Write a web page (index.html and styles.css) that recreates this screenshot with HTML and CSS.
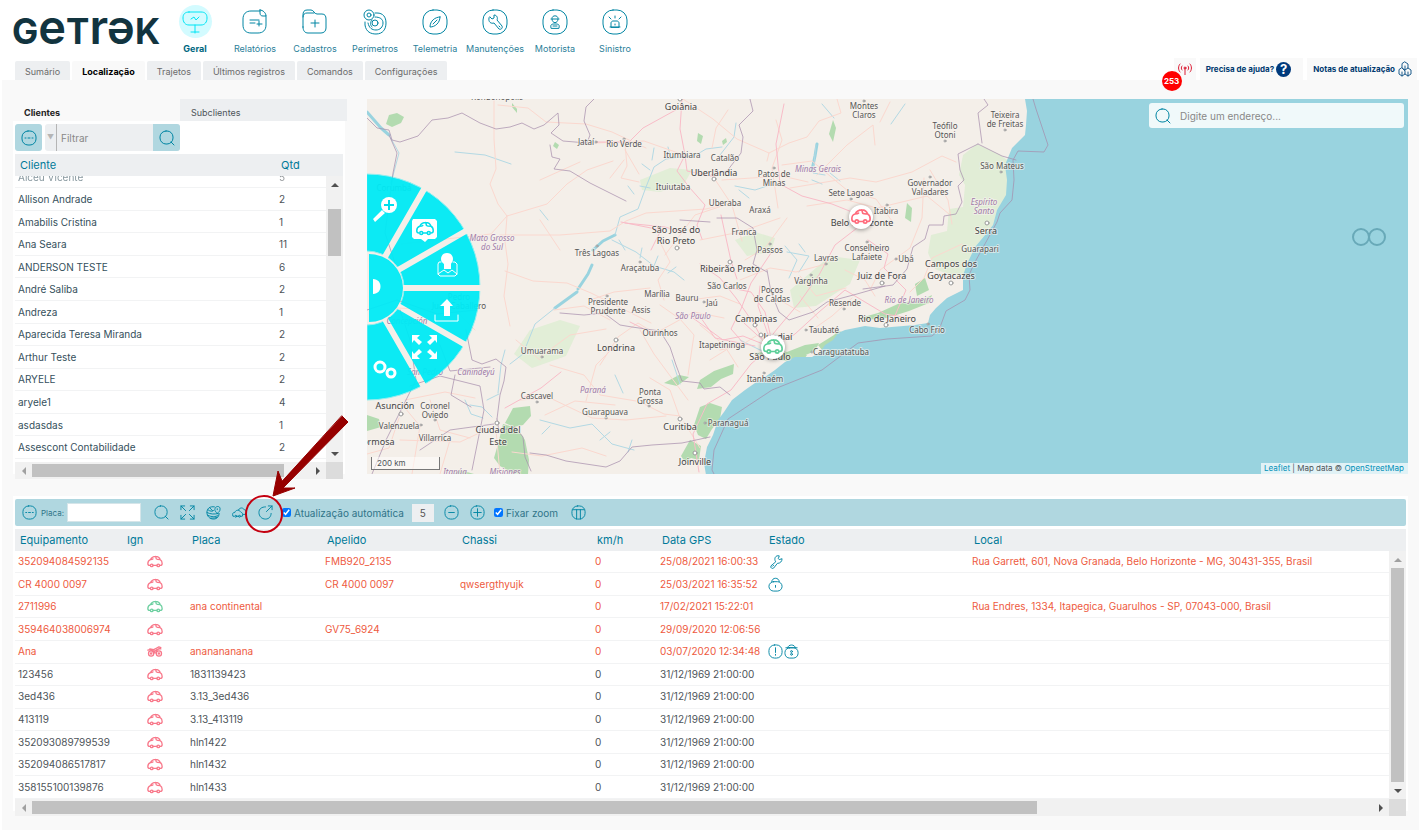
FILE: index.html
```html
<!DOCTYPE html>
<html lang="pt-BR">

<head>
    <meta charset="UTF-8">
    <meta name="viewport" content="width=device-width, initial-scale=1.0">
    <title>Getrak - Localização</title>
    <link rel="stylesheet" href="styles.css">
</head>

<body>
    <!-- icons -->
    <svg class="defs" aria-hidden="true">
        <symbol id="i-geral" viewBox="0 0 26 26">
            <path d="M7 3h12c4 0 6 2 6 6s-2 7-6 7H7c-4 0-6-3-6-7s2-6 6-6zM13 16v8M9 23h8M9 10l3-2 2 3 3-3" />
        </symbol>
        <symbol id="i-relatorios" viewBox="0 0 26 26">
            <path d="M18 2H9C4 2 1 5 1 10v6c0 5 3 8 8 8h7c5 0 8-3 8-8V7M18 1v3c0 2 1 3 3 3h3c0-3-3-6-6-6zM8 11h9M8 14h5M15 15h5M17 12v5" />
        </symbol>
        <symbol id="i-cadastros" viewBox="0 0 26 26">
            <path d="M1 18V6c0-3 1-5 4-5h4c3 0 3 4 6 4h5c3 0 4 2 4 5v9c0 3-2 5-5 5H6c-3 0-5-2-5-6zM1 8c0-3 2-4 4-4h7M13 11v7M9 14h8" />
        </symbol>
        <symbol id="i-perimetros" viewBox="0 0 26 26">
            <circle cx="7" cy="6" r="5" /><circle cx="7" cy="6" r="2" /><circle cx="13" cy="14" r="3" />
            <path d="M13 4h2c6 0 9 4 9 10s-3 11-10 11c-5 0-10-2-11-9v-3M13 8c5 0 8 2 8 6s-3 7-7 7-7-2-8-7M10 11c-2 2-2 5 0 7" />
        </symbol>
        <symbol id="i-telemetria" viewBox="0 0 26 26">
            <rect x="1" y="1" width="24" height="24" rx="10" />
            <path d="M18 8c-5 0-10 4-10 10 5 0 10-4 10-10zM11 15l4-4" />
        </symbol>
        <symbol id="i-manut" viewBox="0 0 26 26">
            <rect x="1" y="1" width="24" height="24" rx="10" />
            <path d="M8 8l2 2 2-1 0-3c3 0 4 3 3 5l5 6c1 2-1 4-3 3l-5-6c-3 1-6-1-5-5zM17 17l1 1" />
        </symbol>
        <symbol id="i-motorista" viewBox="0 0 26 26">
            <rect x="1" y="1" width="24" height="24" rx="10" />
            <path d="M10 9c0-3 6-3 6 0M9 10h8M10 10c0 5 6 5 6 0M9 19c-1-4 1-4 4-4s5 0 4 4zM11 17h4" />
        </symbol>
        <symbol id="i-sinistro" viewBox="0 0 26 26">
            <rect x="1" y="1" width="24" height="24" rx="10" />
            <path d="M9 18v-4c0-1 1-2 2-2h4c1 0 2 1 2 2v4zM8 18h10M13 9V7M9 10L7 8M17 10l2-2M13 15v1" />
        </symbol>
        <symbol id="i-menu" viewBox="0 0 16 16">
            <rect x="1" y="1" width="14" height="14" rx="6" />
            <path d="M4 8h1M7 8h2M11 8h1" />
        </symbol>
        <symbol id="i-search" viewBox="0 0 16 16">
            <rect x="1" y="1" width="13" height="13" rx="6" />
            <path d="M12 12l3 3" />
        </symbol>
        <symbol id="i-expand" viewBox="0 0 16 16">
            <path d="M1 5V1h4M1 1l5 5M11 1h4v4M15 1l-5 5M1 11v4h4M1 15l5-5M15 11v4h-4M15 15l-5-5" />
        </symbol>
        <symbol id="i-globe" viewBox="0 0 16 16">
            <path d="M9 2C4 1 1 4 1 8s3 7 7 7 6-3 6-6M2 5c2 2 5 2 6 1M1 8c4 2 8 2 12 1M2 11c4 2 8 2 11 0M5 14c3 0 5 0 7-1M12 9c-3-3-3-4-2-6s5-2 5 1-1 3-3 5zM12 4v1M4 3l3 3" />
        </symbol>
        <symbol id="i-cars" viewBox="0 0 16 16">
            <path d="M2 12H1c-1-3 0-4 2-4 1-3 4-3 6-1l1 1c1 0 2 2 1 4h-1M5 12h2M7 5c2-3 5-2 6 0 2 0 3 2 2 5h-3" />
            <circle cx="4" cy="12" r="1" /><circle cx="8" cy="12" r="1" />
        </symbol>
        <symbol id="i-refresh" viewBox="0 0 16 16">
            <path d="M8 2C4 2 1 4 1 8s3 7 7 7 6-3 6-6M9 7l6-6M11 1h4v4" />
        </symbol>
        <symbol id="i-minus" viewBox="0 0 16 16">
            <rect x="1" y="1" width="14" height="14" rx="6" />
            <path d="M5 8h6" />
        </symbol>
        <symbol id="i-plus" viewBox="0 0 16 16">
            <rect x="1" y="1" width="14" height="14" rx="6" />
            <path d="M4 8h8M8 4v8" />
        </symbol>
        <symbol id="i-columns" viewBox="0 0 16 16">
            <rect x="1" y="1" width="14" height="14" rx="6" />
            <path d="M2 5h12M6 5v10M10 5v10" />
        </symbol>
        <symbol id="i-car" viewBox="0 0 24 20">
            <path d="M4 16c-2 0-3-1-3-3 0-4 1-5 4-6 2-4 4-5 8-5s6 2 7 5c2 1 3 3 3 6 0 2-1 3-3 3M9 16h6M13 2l1 4c1 1 3 1 6 1M5 7c2 0 3 0 4-1" />
            <circle cx="7" cy="16" r="2" /><circle cx="17" cy="16" r="2" />
        </symbol>
        <symbol id="i-moto" viewBox="0 0 24 20">
            <circle cx="6" cy="13" r="4" /><circle cx="18" cy="13" r="4" /><circle cx="6" cy="13" r="1" /><circle cx="18" cy="13" r="1" />
            <path d="M1 8c5-2 7 0 9 4h4c0-5 3-7 7-6M4 6l6 1 4-2 4-2 3 1M10 9l5 0M10 11l5-4" />
        </symbol>
        <symbol id="i-key" viewBox="0 0 16 16">
            <path d="M8 8c-2-3 0-7 4-6l-1 3 1 1 3-1c0 3-2 5-5 5l-4 5c-1 1-4 0-3-2zM5 13l1-1" />
        </symbol>
        <symbol id="i-lock" viewBox="0 0 16 16">
            <rect x="1" y="5" width="14" height="10" rx="5" />
            <path d="M4 5c0-5 8-5 8 0M8 9v2" />
        </symbol>
        <symbol id="i-alert" viewBox="0 0 16 16">
            <rect x="1" y="1" width="14" height="14" rx="6" />
            <path d="M8 4v5M8 11v1" />
        </symbol>
        <symbol id="i-lock2" viewBox="0 0 16 16">
            <rect x="1" y="4" width="14" height="11" rx="5" />
            <path d="M4 4c0-4 8-4 8 0M2 4h12" />
            <circle cx="8" cy="8" r="1" /><circle cx="8" cy="11" r="1" />
        </symbol>
    </svg>

    <header class="header">
        <div class="top">
            <a href="#" class="logo" aria-label="Getrak">G<span>e</span>T<span>rə</span>K</a>
            <nav class="nav">
                <a href="#" class="current"><span class="ico"><svg><use href="#i-geral" /></svg></span>Geral</a>
                <a href="#"><span class="ico"><svg><use href="#i-relatorios" /></svg></span>Relatórios</a>
                <a href="#"><span class="ico"><svg><use href="#i-cadastros" /></svg></span>Cadastros</a>
                <a href="#"><span class="ico"><svg><use href="#i-perimetros" /></svg></span>Perímetros</a>
                <a href="#"><span class="ico"><svg><use href="#i-telemetria" /></svg></span>Telemetria</a>
                <a href="#"><span class="ico"><svg><use href="#i-manut" /></svg></span>Manutenções</a>
                <a href="#"><span class="ico"><svg><use href="#i-motorista" /></svg></span>Motorista</a>
                <a href="#"><span class="ico"><svg><use href="#i-sinistro" /></svg></span>Sinistro</a>
            </nav>
        </div>
        <div class="bar">
            <nav class="tabs">
                <a href="#">Sumário</a>
                <a href="#" class="current">Localização</a>
                <a href="#">Trajetos</a>
                <a href="#">Últimos registros</a>
                <a href="#">Comandos</a>
                <a href="#">Configurações</a>
            </nav>
            <div class="utils">
                <button type="button" class="antenna" aria-label="Alertas">
                    <svg viewBox="0 0 14 12"><path d="M7 5v7M4 3c-1 1-1 3 0 4M10 3c1 1 1 3 0 4M2 1c-2 2-2 6 0 8M12 1c2 2 2 6 0 8" /><circle cx="7" cy="5" r="1" /></svg>
                    <span class="badge">253</span>
                </button>
                <a href="#" class="ask">Precisa de ajuda? <span class="help">?</span></a>
                <a href="#" class="notes">Notas de atualização
                    <svg viewBox="0 0 14 16"><path d="M7 1l3 2v4L7 9 4 7V3zM4 7l3 3v3l-3 2-3-2V9zM10 7l3 2v4l-3 2-3-2M7 9V5M4 11v4M10 11v4" /></svg>
                </a>
            </div>
        </div>
    </header>

    <main class="page">
        <div class="upper">
            <section class="clients">
                <div class="subtabs">
                    <a href="#" class="current">Clientes</a>
                    <a href="#">Subclientes</a>
                </div>
                <div class="panel">
                    <div class="filter">
                        <button type="button" class="square" aria-label="Menu"><svg><use href="#i-menu" /></svg></button>
                        <div class="field">
                            <span class="caret">▼</span>
                            <input type="text" placeholder="Filtrar" aria-label="Filtrar">
                            <button type="button" class="square" aria-label="Buscar"><svg><use href="#i-search" /></svg></button>
                        </div>
                    </div>
                    <div class="grid">
                        <div class="view">
                            <table class="list">
                                <thead>
                                    <tr><th>Cliente</th><th class="qtd">Qtd</th></tr>
                                </thead>
                            </table>
                            <div class="rows">
                                <table class="list names">
                                    <tbody>
                                        <tr class="faded"><td>Alceu Vicente</td><td class="qtd">5</td></tr>
                                        <tr><td>Allison Andrade</td><td class="qtd">2</td></tr>
                                        <tr><td>Amabilis Cristina</td><td class="qtd">1</td></tr>
                                        <tr><td>Ana Seara</td><td class="qtd">11</td></tr>
                                        <tr><td>ANDERSON TESTE</td><td class="qtd">6</td></tr>
                                        <tr><td>André Saliba</td><td class="qtd">2</td></tr>
                                        <tr><td>Andreza</td><td class="qtd">1</td></tr>
                                        <tr><td>Aparecida Teresa Miranda</td><td class="qtd">2</td></tr>
                                        <tr><td>Arthur Teste</td><td class="qtd">2</td></tr>
                                        <tr><td>ARYELE</td><td class="qtd">2</td></tr>
                                        <tr><td>aryele1</td><td class="qtd">4</td></tr>
                                        <tr><td>asdasdas</td><td class="qtd">1</td></tr>
                                        <tr><td>Assescont Contabilidade</td><td class="qtd">2</td></tr>
                                    </tbody>
                                </table>
                            </div>
                        </div>
                        <div class="vbar">
                            <div class="cap"></div>
                            <i class="up"></i>
                            <div class="rail"><div class="thumb part"></div></div>
                            <i class="down"></i>
                        </div>
                        <div class="hbar">
                            <i class="left off"></i>
                            <div class="rail"><div class="thumb wide"></div></div>
                            <i class="right"></i>
                        </div>
                        <div class="corner"></div>
                    </div>
                </div>
            </section>

            <section class="map">
                <svg class="tiles" viewBox="367 99 1041 375" preserveAspectRatio="xMinYMin slice">
                    <rect class="land" x="367" y="99" width="1041" height="375" />
                    <!-- forests -->
                    <g class="park">
                        <path d="M977 144l22 10 14 10-5 16-1 16-10 14-4 15-18 22-6 16-4 10-10 4-20-8-7-16 3-18 16-4 2-22 14-2 2-22-6-10 4-20z" />
                        <path d="M640 180l30-12 22 2-8 14-24 8-18-2zM790 290l40-34 30 4-10 24-34 22-22 2zM530 330l30-10 20 6-14 30-34 12-18-14zM735 240l20-8 20 6-4 14-24 4z" />
                    </g>
                    <g class="wood">
                        <path d="M389 115l8-2 7 4-3 6-9 4-6-3zM367 415l12 4 2 8-14 4zM460 470l14 4h-20zM513 408l17-2 1 10-8 9-9 2-9-4zM503 424l14 4 8 12 4 20-1 14h-14l-14-8-6-8 4-14zM512 103l5 6 0 4-5-6z" />
                        <path d="M555 142l4 3-2 4-4-3zM698 133l5 3-2 8-4-3zM722 141l4-3 1 4-4 3zM833 120l3 8-3 14-4-8zM907 203l5 5-1 14-6-4zM700 380l14-9 20-7-1 10-12 5-10 8-14 2zM700 407l10-4 12 4-2 12-8 10-6 10-8-4-4-10 4-12z" />
                        <path d="M690 440l11 6-2 14-8-2-6 4-4-6zM753 353l28-2 26 4-2 3-20 3-12-3zM787 352l18-7 14-2-4 8-14 6-12 0zM818 345l16-10 4-4 8 2-10 9-14 8zM860 318l18-5 22-10 24-4 8-4-3 8-20 8-22 7-22 2zM915 284l10-6 4 12-12 6zM664 383l15-8 10 2-12 9z" />
                    </g>
                    <!-- sea -->
                    <path class="sea" d="M1025 99l2 12-1 14-1 10-13 13-7 17 2 15-1 15-9 15-4 15-8 10-10 12-7 15-5 13v15l-4 2-12 6-11 10-6 7-2 8-13 2-35 3-15-2-20 4-7 3-5 7-8 5-5 7-8 5-17 0-10 5-10 8-10 7-10 6-10 7-13 10-8 12-6 8-5 15-6 12-3 16 2 12h703V99z" />
                    <!-- rivers and lakes -->
                    <path class="river wide" d="M367 112l14 16 8 7M578 289l10-15 4-9M555 308l22-16M593 250l10-9 12-6M812 170l3-14 2-12" />
                    <path class="river" d="M389 135l10 18-8 30M555 308l-20 16-12 30-13 10M505 350l-4 15-3 28M615 235l5-18 18-8 8-22 8-20 12-8 30-4 10-6 16-2M612 240l24 12 18 14 20 6 10 8M625 250l-6-10M640 258l2-10M654 266l4-10M668 273l8-6M650 170l-8-6M634 194l-6-8M640 186l10 2M652 160l2-12M670 155l-2-8M720 155l14-18 2-14M735 186l20 4 12-4M739 190l10 8M816 145l-3 28 12 2M812 180l10 4M787 252l22 4-10 16M785 246l12 14-8 18M805 252l-6-8M740 340l20 10 16 2M672 360l8 24M615 375l8 18M540 420l30 8 22-4 20 20 22 6M550 426l-8 8M600 440l10-8M632 440l-4 12M487 400l12-6M470 405l12 2 10 10M465 400l6 14 12 4M830 173l10 8M822 104l12 14M905 104l-14 20M455 152l30 3 26 9M540 210l8 10" />
                    <!-- roads -->
                    <g class="road">
                        <path d="M494 99v40l2 30-6 15 8 20 9 12-2 26 3 22-4 32 6 30M507 216l40-12 20-20 20-14 26-9M507 216l-16 18-90 10M500 235h60l50-4 16-10 20-8 60-4 24-6M505 271l28 10 34 2 24 10 60 30M498 105l30 3 18 14 40 2 26 8 34 16M594 143l50-2 40 14M625 144l2 22-6 12 18 4M625 150l14 24M610 178l14-18" />
                        <path d="M683 99l30 20 24 20 32 14-2 8M769 153l20-10 18-6 12-16 22-8-4-14M778 208l-6-40 10-28-6-20M782 165l30-4 36 30 28 8 16 22M790 188l60-10 26 4 36-10 30-16 14 6M807 206l40-6 30 8 50-12 22 18M880 122l10-20M875 145l-2-20-26 20-30 30M930 170l18 30 4 24M870 290l10-20 30-22 12-30 2-40M910 292l14-14 8-20 30-14M728 110l-12 18-4 20M722 180l60-4 26 6M712 175l20 30 10 36M725 205l-30 10-30 40M700 240l40-8 40-14M745 260l20-12 22-30M740 280l30-12 26 4 30-8M800 276l16 20 30-8M845 270l20 10 10 16" />
                        <path d="M540 360l-24-20M550 365l34 10 16 20 36 6M540 357l30-22 36-6M600 365l18-28 20-14 16 10M640 330l14 24 34 46M654 334l40-22 30 6M616 345l-20 20-10 36M640 402l24 12 16 2M680 418l-10-28-20-12M545 415l30-14 40 4M520 400l30-2 42 20 34 2 40-4M512 452l30 4 40-8 24 8M610 320l-26-14-30 4M590 300l24-8 36-4M660 305l20 14 14 16-6 40M690 300l30-4 20 8M700 325l24 20 14 22M720 350l20-4 16-10M710 360l16-10M664 300l-6-20 12-18-10-20M430 400l10 30 30 8M400 402l20 24-8 48M405 400l40-8 30 6M399 418l-10 30-22 6M400 440l60 2 30-14M440 474l10-34M500 474l-4-44M475 330l-20-20-60-2M540 180l40-18M560 250l-20-30M700 448l-16-26M818 318l-18-22M812 330l20-14 20-18M780 300l20 12" />
                    </g>
                    <path class="road main" d="M682 99l-2 30 5 26-8 16 12 16 16 18-8 20 5 14M683 106l-40 22-14 14h-32M685 155l2 16 28 6M625 223l40 4 20 6M700 264l20 14 16 20 18 26 12 22M721 215l10 46 6 18M745 345l-14-16 10-20 10-26 20-30M852 212l-20-8-30-8-22-12-4-40 8-40M861 225l-26 20-16 30-20 28-22 26-14 18M868 240l20 14-4 14 22 22-12 28M773 348l-30-12-20 4-30-22M773 348l22-14 24-22 26-22 40 24 24 4M765 352l-14 12-20 26-24 14-14 30 6 38M505 408l36-20 20-16M621 222l40 8-10 20M773 346l-8-34-14-20-20-4M755 346l-40-8-14-20M768 345l-24-22M770 340l-12-34 2-20M654 334l-24-12" />
                    <!-- borders -->
                    <path class="border" d="M367 118l10 10 12 2 3 10 8 2 18-6 14-16 16-2 14-5 18 10 16 6 14-2 12-4 12 6 10-4 14-12 1 12-8 8 12 8 24 2 3-8-6-14 2-14 14-14M550 145l2 12 8 2-6 10 16 2 20 12 36 18M389 135l8 18-4 20-8 60 10 30M750 99l3 12-14 14 4 12-2 16-14 18-16 4M984 99l4 6-10 8 4 30M978 144l24 12 14 4M978 144l-20 10 2 16 4 10-6 6 4 16-6 12-12 2-1 9-14 0-4 14-12 8-6 22-14 16-30 4M717 218l20 0 16 10 4 22-4 14 14 8M680 220l30 2M767 270l4 22 8 20 10 8 24-8 14-10 30-8 28-8M560 313l24 2 20-2 16 12 12 2 28 4 10 16 6 18 6 16 18 2 4 6 16-2 10 8" />
                    <path class="border" d="M466 330l6 30 10 4 14-5 10 8-2 14-4 14-3 24M497 419l2 12 16-4 8 10 2 20 6 14M530 453l16 2 20 6 40 6 14-6 12-14 20-2 30-2 28-6M367 310l30-10 40 14 40-4M400 310l10 30 6 40-10 20-20 40-14 34M410 386l30-10 40 10 4 24-12 60M455 375l-4 20 20 12M420 450l30-20 44-6M440 345l10 26 40-4" />
                    <path class="border" d="M1033 99l3 10 12 36-4 7-26-1-5 9 1 20-2 20-12 13-3 9-22 40-6 13 1 15-5 10-19 11-7 19-7 6-45 3-29 4-36 27-50 20-44 29-14 31-2 20 2 4" />
                    <g class="dot">
                        <circle cx="680" cy="99" r="2" /><circle cx="596" cy="142" r="1" /><circle cx="624" cy="139" r="1" /><circle cx="714" cy="179" r="2" /><circle cx="677" cy="248" r="2" /><circle cx="730" cy="262" r="2" /><circle cx="616" cy="340" r="2" /><circle cx="680" cy="419" r="2" /><circle cx="497" cy="423" r="2" /><circle cx="695" cy="453" r="2" /><circle cx="886" cy="325" r="2" /><circle cx="882" cy="283" r="2" /><circle cx="951" cy="283" r="2" /><circle cx="987" cy="223" r="2" /><circle cx="755" cy="325" r="2" /><circle cx="761" cy="335" r="2" /><circle cx="597" cy="246" r="1" /><circle cx="640" cy="262" r="1" /><circle cx="607" cy="296" r="1" /><circle cx="542" cy="357" r="1" /><circle cx="537" cy="402" r="1" /><circle cx="606" cy="418" r="1" /><circle cx="649" cy="406" r="1" /><circle cx="774" cy="168" r="1" /><circle cx="864" cy="101" r="1" /><circle cx="945" cy="141" r="1" /><circle cx="1005" cy="130" r="1" /><circle cx="930" cy="177" r="1" /><circle cx="1001" cy="172" r="1" /><circle cx="851" cy="199" r="1" /><circle cx="887" cy="205" r="1" /><circle cx="770" cy="244" r="1" /><circle cx="867" cy="242" r="1" /><circle cx="826" cy="264" r="1" /><circle cx="811" cy="275" r="1" /><circle cx="844" cy="309" r="1" /><circle cx="806" cy="330" r="1" /><circle cx="812" cy="352" r="1" /><circle cx="764" cy="373" r="1" /><circle cx="705" cy="423" r="1" /><circle cx="401" cy="414" r="2" /><circle cx="435" cy="420" r="1" /><circle cx="421" cy="425" r="1" /><circle cx="928" cy="324" r="1" /><circle cx="896" cy="259" r="1" /><circle cx="704" cy="302" r="1" />
                    </g>
                    <g class="town">
                        <text x="497" y="100">Rondonópolis</text><text x="586" y="145">Jataí</text><text x="624" y="147">Rio Verde</text>
                        <text x="682" y="158">Itumbiara</text><text x="725" y="161">Catalão</text><text x="673" y="190">Ituiutaba</text>
                        <text x="864" y="109">Montes</text><text x="864" y="118">Claros</text><text x="945" y="129">Teófilo</text><text x="945" y="138">Otoni</text>
                        <text x="1005" y="118">Teixeira</text><text x="1005" y="127">de Freitas</text><text x="1002" y="169">São Mateus</text>
                        <text x="774" y="177">Patos de</text><text x="774" y="186">Minas</text><text x="851" y="196">Sete Lagoas</text>
                        <text x="930" y="186">Governador</text><text x="930" y="195">Valadares</text><text x="725" y="206">Uberaba</text><text x="760" y="213">Araxá</text>
                        <text x="744" y="235">Franca</text><text x="770" y="253">Passos</text><text x="886" y="214">Itabira</text>
                        <text x="867" y="251">Conselheiro</text><text x="867" y="260">Lafaiete</text><text x="826" y="261">Lavras</text><text x="906" y="262">Ubá</text>
                        <text x="980" y="252">Guarapari</text><text x="597" y="256">Três Lagoas</text><text x="640" y="271">Araçatuba</text>
                        <text x="811" y="284">Varginha</text><text x="727" y="289">São Carlos</text><text x="772" y="293">Poços</text><text x="772" y="302">de Caldas</text>
                        <text x="657" y="297">Marília</text><text x="687" y="301">Bauru</text><text x="712" y="306">Jaú</text><text x="608" y="305">Presidente</text><text x="608" y="314">Prudente</text>
                        <text x="641" y="313">Assis</text><text x="660" y="336">Ourinhos</text><text x="845" y="306">Resende</text><text x="824" y="333">Taubaté</text>
                        <text x="722" y="348">Itapetininga</text><text x="841" y="355">Caraguatatuba</text><text x="765" y="382">Itanhaém</text><text x="927" y="333">Cabo Frio</text>
                        <text x="542" y="354">Umuarama</text><text x="537" y="399">Cascavel</text><text x="650" y="395">Ponta</text><text x="650" y="404">Grossa</text>
                        <text x="605" y="415">Guarapuava</text><text x="728" y="426">Paranaguá</text><text x="435" y="409">Coronel</text><text x="435" y="418">Oviedo</text>
                        <text x="399" y="429">Valenzuela</text><text x="435" y="441">Villarrica</text><text x="459" y="300">Pedro</text><text x="459" y="309">Juan Caballero</text>
                        <text x="394" y="191">Corumbá</text>
                    </g>
                    <g class="city">
                        <text x="681" y="110">Goiânia</text><text x="714" y="176">Uberlândia</text><text x="676" y="233">São José do</text><text x="676" y="244">Rio Preto</text>
                        <text x="730" y="272">Ribeirão Preto</text><text x="862" y="226">Belo Horizonte</text><text x="986" y="234">Serra</text>
                        <text x="951" y="267">Campos dos</text><text x="951" y="279">Goytacazes</text><text x="882" y="279">Juiz de Fora</text><text x="887" y="322">Rio de Janeiro</text>
                        <text x="756" y="322">Campinas</text><text x="778" y="340">Jundiaí</text><text x="770" y="360">São Paulo</text><text x="616" y="351">Londrina</text>
                        <text x="680" y="430">Curitiba</text><text x="695" y="465">Joinville</text><text x="395" y="409">Asunción</text><text x="498" y="433">Ciudad del</text><text x="498" y="445">Este</text><text x="376" y="445">Formosa</text>
                    </g>
                    <g class="state">
                        <text x="492" y="241">Mato Grosso</text><text x="492" y="250">do Sul</text><text x="818" y="172">Minas Gerais</text><text x="984" y="205">Espírito</text><text x="984" y="214">Santo</text>
                        <text x="693" y="319">São Paulo</text><text x="909" y="303">Rio de Janeiro</text><text x="593" y="393">Paraná</text><text x="476" y="375">Canindeyú</text>
                        <text x="407" y="324">Concepción</text><text x="425" y="375">San Pedro</text><text x="455" y="475">Itapúa</text><text x="505" y="475">Misiones</text>
                    </g>
                    <g class="spin"><circle cx="1361" cy="237" r="8" /><circle cx="1377" cy="237" r="8" /></g>

                    <!-- radial menu -->
                    <mask id="slices">
                        <path fill="#fff" d="M367 174a113 113 0 0 1 0 226v-75a37 37 0 0 0 0-74z" />
                        <path stroke="#000" stroke-width="6" d="M367 288h120M367 288l104-60M367 288l60-104M367 288l104 60M367 288l60 104" />
                    </mask>
                    <rect class="wheel" x="367" y="170" width="116" height="232" mask="url(#slices)" />
                    <path class="wheel" d="M369 254a34 34 0 0 1 0 68z" />
                    <g class="glyph">
                        <path d="M373 279c10 0 10 15 0 15z" />
                        <circle cx="389" cy="205" r="8" />
                        <path d="M382 210l3 3-10 9-2-3zM413 219h22l2 2v16l-2 2h-7l-3 3-4-3h-7l-2-2v-16z" />
                        <path d="M447 253c4 0 6 3 6 6s-2 4-2 5v5h-7v-5c-1-1-3-2-3-5s2-6 6-6z" />
                        <path d="M447 299l6 7h-3v10h-6v-10h-4z" />
                        <path d="M412 335h8l-3 3 5 4-3 3-5-5-2 3zM437 335h-8l3 3-5 4 3 3 5-5 2 3zM412 359h8l-3-3 5-4-3-3-5 5-2-3zM437 359h-8l3-3-5-4 3-3 5 5 2-3z" />
                    </g>
                    <path class="glyph-cut" d="M389 200v10M384 205h10" />
                    <use class="mini" href="#i-car" x="415" y="221" width="20" height="15" />
                    <path class="glyph-line" d="M435 315v6h23v-6M441 262h-2l-1 2v10l2 2h15l2-2v-10l-2-2h-2M438 274l6-4 4 3 4-3 5 4" />
                    <g class="gears"><circle cx="380" cy="367" r="5" /><circle cx="391" cy="373" r="4" /></g>

                    <!-- vehicles -->
                    <g class="pin red"><circle cx="861" cy="217" r="12" /><use href="#i-car" x="851" y="208" width="20" height="17" /></g>
                    <g class="pin green"><circle cx="773" cy="347" r="12" /><use href="#i-car" x="763" y="338" width="20" height="17" /></g>
                </svg>
                <div class="address">
                    <svg><use href="#i-search" /></svg>
                    <input type="text" placeholder="Digite um endereço..." aria-label="Digite um endereço">
                </div>
                <div class="scale">200 km</div>
                <div class="credits"><a href="#">Leaflet</a> | Map data © <a href="#">OpenStreetMap</a></div>
            </section>
        </div>

        <section class="panel vehicles">
            <div class="toolbar">
                <button type="button" class="menu" aria-label="Menu"><svg><use href="#i-menu" /></svg></button>
                <label for="placa" class="small">Placa:</label>
                <input type="text" id="placa" class="plate">
                <button type="button" class="tool" aria-label="Buscar"><svg><use href="#i-search" /></svg></button>
                <button type="button" class="tool" aria-label="Expandir"><svg><use href="#i-expand" /></svg></button>
                <button type="button" class="tool" aria-label="Mapa"><svg><use href="#i-globe" /></svg></button>
                <button type="button" class="tool" aria-label="Veículos"><svg><use href="#i-cars" /></svg></button>
                <button type="button" class="tool" aria-label="Atualizar"><svg><use href="#i-refresh" /></svg></button>
                <label class="check"><input type="checkbox" checked>Atualização automática</label>
                <input type="text" class="seconds" value="5" aria-label="Intervalo">
                <button type="button" class="tool" aria-label="Menos"><svg><use href="#i-minus" /></svg></button>
                <button type="button" class="tool" aria-label="Mais"><svg><use href="#i-plus" /></svg></button>
                <label class="check"><input type="checkbox" checked>Fixar zoom</label>
                <button type="button" class="tool last" aria-label="Colunas"><svg><use href="#i-columns" /></svg></button>
                <svg class="pointer" viewBox="0 0 106 120">
                    <circle cx="20" cy="99" r="18" />
                    <path d="M98 1l6 6-65 66 12 0-22 8 5-25 4 10z" />
                </svg>
            </div>
            <div class="grid">
                <table class="list fleet">
                    <colgroup>
                        <col class="c-equip"><col class="c-ign"><col class="c-mid"><col class="c-mid"><col class="c-mid"><col class="c-ign"><col class="c-equip"><col class="c-state"><col>
                    </colgroup>
                    <thead>
                        <tr><th>Equipamento</th><th>Ign</th><th>Placa</th><th>Apelido</th><th>Chassi</th><th>km/h</th><th>Data GPS</th><th>Estado</th><th>Local</th></tr>
                    </thead>
                    <tbody>
                        <tr class="late"><td>352094084592135</td><td class="ign"><svg><use href="#i-car" /></svg></td><td></td><td>FMB920_2135</td><td></td><td>0</td><td>25/08/2021 16:00:33</td><td class="state-ico"><svg><use href="#i-key" /></svg></td><td>Rua Garrett, 601, Nova Granada, Belo Horizonte - MG, 30431-355, Brasil</td></tr>
                        <tr class="late"><td>CR 4000 0097</td><td class="ign"><svg><use href="#i-car" /></svg></td><td></td><td>CR 4000 0097</td><td>qwsergthyujk</td><td>0</td><td>25/03/2021 16:35:52</td><td class="state-ico"><svg><use href="#i-lock" /></svg></td><td></td></tr>
                        <tr class="late"><td>2711996</td><td class="ign on"><svg><use href="#i-car" /></svg></td><td>ana continental</td><td></td><td></td><td>0</td><td>17/02/2021 15:22:01</td><td></td><td>Rua Endres, 1334, Itapegica, Guarulhos - SP, 07043-000, Brasil</td></tr>
                        <tr class="late"><td>359464038006974</td><td class="ign"><svg><use href="#i-car" /></svg></td><td></td><td>GV75_6924</td><td></td><td>0</td><td>29/09/2020 12:06:56</td><td></td><td></td></tr>
                        <tr class="late"><td>Ana</td><td class="ign"><svg><use href="#i-moto" /></svg></td><td>ananananana</td><td></td><td></td><td>0</td><td>03/07/2020 12:34:48</td><td class="state-ico"><svg><use href="#i-alert" /></svg><svg><use href="#i-lock2" /></svg></td><td></td></tr>
                        <tr><td>123456</td><td class="ign"><svg><use href="#i-car" /></svg></td><td>1831139423</td><td></td><td></td><td>0</td><td>31/12/1969 21:00:00</td><td></td><td></td></tr>
                        <tr><td>3ed436</td><td class="ign"><svg><use href="#i-car" /></svg></td><td>3.13_3ed436</td><td></td><td></td><td>0</td><td>31/12/1969 21:00:00</td><td></td><td></td></tr>
                        <tr><td>413119</td><td class="ign"><svg><use href="#i-car" /></svg></td><td>3.13_413119</td><td></td><td></td><td>0</td><td>31/12/1969 21:00:00</td><td></td><td></td></tr>
                        <tr><td>352093089799539</td><td class="ign"><svg><use href="#i-car" /></svg></td><td>hln1422</td><td></td><td></td><td>0</td><td>31/12/1969 21:00:00</td><td></td><td></td></tr>
                        <tr><td>352094086517817</td><td class="ign"><svg><use href="#i-car" /></svg></td><td>hln1432</td><td></td><td></td><td>0</td><td>31/12/1969 21:00:00</td><td></td><td></td></tr>
                        <tr><td>358155100139876</td><td class="ign"><svg><use href="#i-car" /></svg></td><td>hln1433</td><td></td><td></td><td>0</td><td>31/12/1969 21:00:00</td><td></td><td></td></tr>
                    </tbody>
                </table>
                <div class="vbar">
                    <div class="cap"></div>
                    <i class="up off"></i>
                    <div class="rail"><div class="thumb"></div></div>
                    <i class="down"></i>
                </div>
                <div class="hbar">
                    <i class="left off"></i>
                    <div class="rail"><div class="thumb"></div></div>
                    <i class="right"></i>
                </div>
                <div class="corner"></div>
            </div>
        </section>
    </main>
</body>

</html>
```

FILE: styles.css
```css
* {
    margin: 0;
    padding: 0;
    box-sizing: border-box;
}

body {
    font-family: Inter, "Liberation Sans", sans-serif;
    font-size: 10px;
    color: #4d5459;
    background-color: #fff;
}

a {
    color: inherit;
    text-decoration: none;
}

button,
input {
    border: 0;
    font: inherit;
    color: inherit;
    background: none;
}

button {
    cursor: pointer;
}

svg {
    fill: none;
    stroke: #0085a3;
    stroke-linecap: round;
    stroke-linejoin: round;
    display: block;
}

.defs {
    position: absolute;
    width: 0;
    height: 0;
}

/* header */
.top {
    display: flex;
    height: 58px;
}

.logo {
    width: 165px;
    padding-left: 12px;
    font-size: 35px;
    font-weight: 700;
    line-height: 54px;
    color: #12343f;
    white-space: nowrap;
}

.logo span {
    font-size: 47px;
    font-weight: 600;
}

.nav {
    display: flex;
}

.nav a {
    width: 60px;
    padding-top: 5px;
    display: flex;
    flex-direction: column;
    align-items: center;
    gap: 5px;
    font-size: 9px;
    line-height: 12px;
    color: #2a8099;
    white-space: nowrap;
}

.nav .ico {
    width: 33px;
    height: 33px;
    border-radius: 50%;
    display: grid;
    place-items: center;
}

.nav svg {
    width: 26px;
    height: 26px;
}

.nav .current {
    font-weight: 700;
    color: #00677f;
}

.nav .current .ico {
    background-color: #d3fbff;
}

.nav .current svg {
    stroke: #00e5f5;
}

.bar {
    display: flex;
    justify-content: space-between;
    align-items: flex-end;
    padding: 0 6px 0 15px;
}

.tabs {
    display: flex;
    gap: 2px;
    font-size: 9px;
    line-height: 19px;
    color: #6b6b6b;
}

.tabs a {
    padding: 1px 10px 0;
    height: 19px;
    border-radius: 2px 2px 0 0;
    background-color: #edeff1;
}

.tabs .current {
    background-color: #f9f9f9;
    color: #000;
    font-weight: 700;
}

.utils {
    display: flex;
    gap: 4px;
    font-size: 8px;
    font-weight: 700;
    color: #003a70;
}

.utils > * {
    height: 22px;
    padding: 0 6px;
    display: flex;
    align-items: center;
    gap: 2px;
    background-color: #f9f9f9;
}

.utils .antenna {
    position: relative;
    padding: 0 4px;
}

.antenna svg {
    width: 14px;
    height: 12px;
    stroke: #dc1c34;
}

.badge {
    position: absolute;
    left: -12px;
    top: 13px;
    width: 20px;
    height: 20px;
    border-radius: 50%;
    background-color: #f00;
    color: #fff;
    line-height: 20px;
    text-align: center;
}

.utils .ask {
    padding-right: 12px;
}

.help {
    width: 15px;
    height: 15px;
    border-radius: 50%;
    background-color: #003a7c;
    color: #fff;
    font-size: 13px;
    line-height: 15px;
    text-align: center;
}

.utils .notes {
    padding-right: 5px;
    gap: 3px;
}

.notes svg {
    width: 14px;
    height: 16px;
    stroke: #1d5c8c;
}

/* page */
.page {
    margin: 0 4px 0 2px;
    padding: 19px 11px;
    background-color: #f9f9f9;
}

.upper {
    display: flex;
    gap: 20px;
    margin-bottom: 22px;
}

.clients {
    width: 334px;
    height: 375px;
    flex: none;
}

.subtabs {
    display: grid;
    grid-template-columns: 1fr 1fr;
    font-size: 9px;
    line-height: 22px;
}

.subtabs a {
    height: 22px;
    padding: 3px 11px 0;
    background-color: #edeff1;
}

.subtabs .current {
    background: none;
    color: #222;
    font-weight: 700;
}

.panel {
    height: 353px;
    padding: 3px 2px 0;
    margin-right: 2px;
    background-color: #fff;
}

.filter {
    display: flex;
    gap: 3px;
    margin-bottom: 3px;
}

.square {
    width: 27px;
    height: 27px;
    display: grid;
    place-items: center;
    border-radius: 3px;
    background-color: #b0d7e0;
}

.square svg {
    width: 16px;
    height: 16px;
}

.field {
    display: flex;
    align-items: center;
    border-radius: 3px;
    background-color: #edeff1;
}

.field .square {
    border-radius: 0 3px 3px 0;
}

.caret {
    width: 11px;
    font-size: 7px;
    text-align: center;
    color: #b5b5b5;
}

.field input {
    width: 97px;
    height: 27px;
    padding-left: 4px;
    border-left: 1px solid #b5b5b5;
}

input::placeholder {
    color: #888;
    opacity: 1;
}

.grid {
    display: grid;
    grid-template-columns: 1fr 17px;
}

.list {
    width: 100%;
    border-collapse: collapse;
    table-layout: fixed;
}

.list th {
    height: 22px;
    padding: 0 5px;
    text-align: left;
    font-size: 11px;
    font-weight: 400;
    line-height: 12px;
    color: #007a99;
    background-color: #edeff1;
}

.list td {
    padding: 0 3px;
    border-bottom: 1px solid #f2f3f4;
    line-height: 12px;
    white-space: nowrap;
}

.list .qtd {
    width: 50px;
}

.rows {
    height: 286px;
    overflow: hidden;
}

.names {
    height: 293px;
    margin-top: -10px;
}

.faded {
    opacity: .6;
}

.clients td:first-child {
    color: #35505c;
}

/* scroll bars */
.vbar,
.hbar {
    display: flex;
    background-color: #f1f1f1;
}

.vbar {
    flex-direction: column;
}

.cap {
    height: 22px;
    background-color: #edeff1;
}

.hbar {
    height: 17px;
}

.corner {
    background-color: #dcdcdc;
}

.rail {
    flex: 1;
}

.vbar .rail {
    padding: 0 2px;
}

.hbar .rail {
    padding: 2px 0;
}

.thumb {
    height: 100%;
    background-color: #c1c1c1;
}

.thumb.part {
    height: 47px;
    margin-top: 16px;
}

.hbar .thumb {
    width: 75%;
}

.hbar .thumb.wide {
    width: 91%;
}

.vbar i,
.hbar i {
    width: 17px;
    height: 17px;
    display: grid;
    place-items: center;
}

.vbar i::before,
.hbar i::before {
    content: "";
    border: 4px solid transparent;
}

.up::before {
    border-top: 0 !important;
    border-bottom-color: #505050 !important;
}

.down::before {
    border-bottom: 0 !important;
    border-top-color: #505050 !important;
}

.left::before {
    border-left: 0 !important;
    border-right-color: #505050 !important;
}

.right::before {
    border-right: 0 !important;
    border-left-color: #505050 !important;
}

.off {
    opacity: .5;
}

/* map */
.map {
    position: relative;
    flex: 1;
    height: 375px;
    overflow: hidden;
    background-color: #99d3df;
}

.tiles {
    width: 100%;
    height: 100%;
}

.land {
    fill: #f4efe9;
    stroke: none;
}

.sea {
    fill: #99d3df;
    stroke: none;
}

.wood {
    fill: #b3dbb0;
    stroke: none;
}

.park {
    fill: #d5eccb;
    stroke: none;
    opacity: .6;
}

.river {
    stroke: #b3d9e4;
}

.river.wide {
    stroke: #99d3df;
    stroke-width: 3;
}

.road {
    stroke: #fbd8cf;
}

.road.main {
    stroke: #f9bcc8;
}

.border {
    stroke: #a58bab;
    opacity: .7;
}

.dot {
    fill: #fff;
    stroke: #999;
}

.tiles text {
    stroke: #f7f3ef;
    stroke-opacity: .6;
    stroke-width: 2px;
    paint-order: stroke;
    text-anchor: middle;
    font-family: "Noto Sans", sans-serif;
}

.town text {
    font-size: 8px;
    fill: #555;
}

.city text {
    font-size: 9px;
    fill: #444;
}

.state text {
    font-size: 8px;
    font-style: italic;
    fill: #a07ba8;
}

.spin {
    stroke: #68a9b8;
    stroke-width: 2;
}

.wheel {
    fill: #00eaf5;
    stroke: none;
    opacity: .95;
}

.glyph {
    fill: #fff;
    stroke: none;
}

.glyph-cut {
    stroke: #00dfec;
    stroke-width: 2;
    stroke-linecap: butt;
}

.mini {
    stroke: #00dfec;
    stroke-width: 2;
}

.glyph-line {
    stroke: #fff;
}

.gears {
    stroke: #fff;
    stroke-width: 3;
}

.pin {
    stroke-width: 2;
}

.pin circle:first-child {
    fill: #fff;
    stroke: none;
    filter: drop-shadow(0 1px 2px rgba(0, 0, 0, .4));
}

.red {
    stroke: #ff6b7c;
}

.green {
    stroke: #5fcf9a;
}

.address {
    position: absolute;
    top: 4px;
    right: 4px;
    width: 255px;
    height: 25px;
    padding-left: 6px;
    display: flex;
    align-items: center;
    gap: 9px;
    border-radius: 3px;
    background-color: rgba(255, 255, 255, .85);
}

.address svg {
    width: 16px;
    height: 16px;
}

.address input {
    flex: 1;
    height: 25px;
}

.scale {
    position: absolute;
    left: 4px;
    bottom: 4px;
    width: 69px;
    height: 13px;
    padding-left: 5px;
    border: 1px solid #777;
    border-top: 0;
    background-color: rgba(255, 255, 255, .5);
    font-size: 8px;
    line-height: 12px;
}

.credits {
    position: absolute;
    right: 0;
    bottom: 0;
    padding: 0 4px 0 3px;
    background-color: rgba(255, 255, 255, .7);
    font-size: 8px;
    line-height: 11px;
}

.credits a {
    color: #0090b8;
}

/* vehicles */
.vehicles {
    height: 315px;
    margin: 0;
}

.toolbar {
    position: relative;
    display: flex;
    align-items: center;
    height: 27px;
    padding-left: 7px;
    margin-bottom: 3px;
    border-radius: 2px;
    background-color: #b0d7e0;
    color: #2f7488;
}

.toolbar svg {
    width: 15px;
    height: 15px;
}

.menu {
    margin-right: 4px;
}

.small {
    font-size: 8px;
}

.plate {
    width: 74px;
    height: 19px;
    margin: 0 8px 0 3px;
    background-color: #fff;
    border: 1px solid #d5e5e9;
}

.tool {
    width: 26px;
    height: 26px;
    display: grid;
    place-items: center;
}

.check {
    display: flex;
    align-items: center;
    gap: 3px;
    padding-left: 3px;
}

.check input {
    width: 9px;
    height: 9px;
    accent-color: #0075ff;
}

.seconds {
    width: 22px;
    height: 18px;
    margin: 0 5px 0 8px;
    text-align: center;
    background-color: #edeff1;
    color: #555;
}

.last {
    margin-left: 7px;
}

/* arrow pointing at the refresh button */
.toolbar .pointer {
    position: absolute;
    left: 229px;
    top: -84px;
    width: 106px;
    height: 120px;
    pointer-events: none;
}

.pointer circle {
    stroke: #c40010;
    stroke-width: 2;
}

.pointer path {
    fill: #960000;
    stroke: #960000;
}

.fleet {
    height: 270px;
}

.c-equip {
    width: 107px;
}

.c-ign {
    width: 65px;
}

.c-mid {
    width: 135px;
}

.c-state {
    width: 205px;
}

.fleet td {
    line-height: 15px;
}

.late {
    color: #ee5a3e;
}

.list .ign {
    padding-left: 25px;
}

.ign svg {
    width: 16px;
    height: 13px;
    stroke: #f8788a;
    stroke-width: 2;
}

.ign.on svg {
    stroke: #6dcfa0;
}

.list .state-ico {
    padding-left: 4px;
}

.state-ico svg {
    display: inline-block;
    width: 15px;
    height: 15px;
    margin-right: 1px;
    vertical-align: top;
}
```
